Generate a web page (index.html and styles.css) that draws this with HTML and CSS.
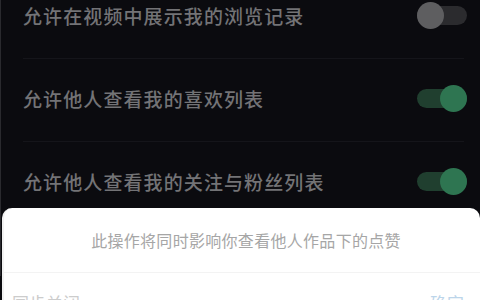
FILE: index.html
```html
<!DOCTYPE html>
<html lang="zh-CN">
<head>
<meta charset="utf-8">
<link rel="stylesheet" href="styles.css">
</head>
<body>
<div class="page">
  <ul class="settings">
    <li class="row">
      <span class="label">允许在视频中展示我的浏览记录</span>
      <span class="switch off"><span class="thumb"></span></span>
    </li>
    <li class="row">
      <span class="label">允许他人查看我的喜欢列表</span>
      <span class="switch on"><span class="thumb"></span></span>
    </li>
    <li class="row">
      <span class="label">允许他人查看我的关注与粉丝列表</span>
      <span class="switch on"><span class="thumb"></span></span>
    </li>
  </ul>
</div>
<div class="sheet">
  <p class="sheet-title">此操作将同时影响你查看他人作品下的点赞</p>
  <div class="sheet-row">
    <span class="sheet-left">同步关闭</span>
    <span class="sheet-right">确定</span>
  </div>
</div>
</body>
</html>
```
FILE: styles.css
```css
* { box-sizing: border-box; }
html, body {
  margin: 0;
  padding: 0;
  width: 480px;
  height: 300px;
  overflow: hidden;
  background: #0b0b0f;
  font-family: "Noto Sans CJK SC", "Noto Sans", sans-serif;
}
.page {
  border-left: 1px solid #2a2a2e;
  height: 300px;
}
.settings {
  list-style: none;
  margin: -24px 0 0;
  padding: 0;
}
.row {
  height: 83px;
  margin: 0 16px 0 22px;
  border-bottom: 1px solid #15151a;
  display: flex;
  align-items: center;
  justify-content: space-between;
  padding-bottom: 4px;
}
.label {
  color: #737376;
  font-size: 19px;
  font-weight: 500;
  letter-spacing: 1.1px;
}
.switch {
  width: 50px;
  height: 19px;
  border-radius: 10px;
  display: flex;
  align-items: center;
  margin-right: -3px;
}
.switch .thumb {
  width: 27px;
  height: 27px;
  border-radius: 50%;
}
.switch.off {
  background: #2b2b2e;
  justify-content: flex-start;
}
.switch.off .thumb { background: #5e5e60; }
.switch.on {
  background: #203f2f;
  justify-content: flex-end;
}
.switch.on .thumb { background: #2e7551; }
.sheet {
  position: fixed;
  left: 2px;
  right: 0;
  top: 208px;
  height: 120px;
  background: #ffffff;
  border-radius: 10px 10px 0 0;
  border-left: 2px solid #f2f2f2;
}
.sheet-title {
  margin: 0;
  height: 65px;
  display: flex;
  align-items: center;
  justify-content: center;
  font-size: 16px;
  color: #a6a6a6;
  letter-spacing: 0.3px;
  border-bottom: 1px solid #f3f3f3;
  padding-left: 8px;
}
.sheet-row {
  display: flex;
  justify-content: space-between;
  padding: 17px 16px 0 8px;
  font-size: 17px;
}
.sheet-left { color: #cccccc; }
.sheet-right { color: #bcd5ea; }
```
